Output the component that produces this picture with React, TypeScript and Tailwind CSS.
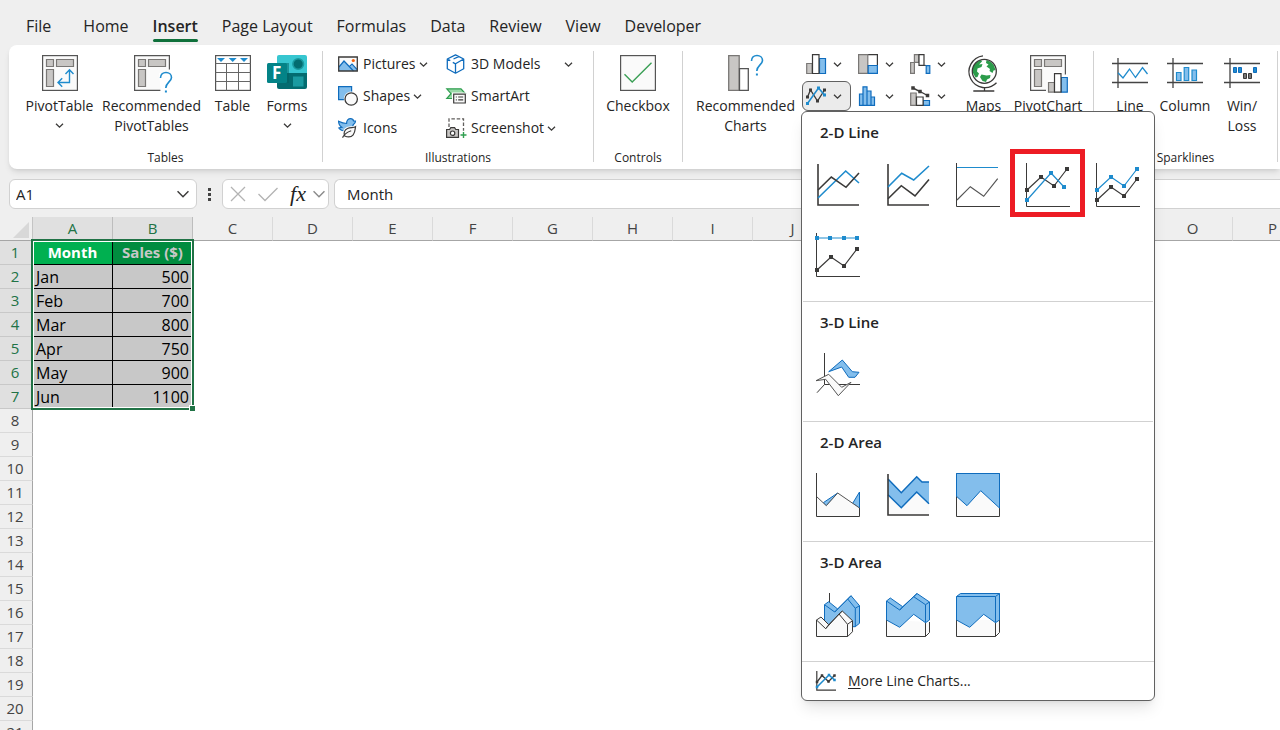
import type { ReactNode } from 'react'
import clsx from 'clsx'

const INK = '#3b3a39'
const GREY = '#c8c6c4'
const EDGE = '#797775'
const BLUE = '#1e8bcd'
const NAVY = '#0f6cbd'
const SKY = '#83beec'
const PALE = '#fafafa'

type Point = [number, number]

const toPoints = (points: Point[]) => points.map((p) => p.join(',')).join(' ')

function Svg({
  w,
  h = w,
  children,
}: {
  w: number
  h?: number
  children: ReactNode
}) {
  return (
    <svg
      width={w}
      height={h}
      viewBox={`0 0 ${w} ${h}`}
      fill="none"
      className="shrink-0 overflow-visible"
      aria-hidden="true"
    >
      {children}
    </svg>
  )
}

function Chevron({ size = 9, color = INK, thin }: { size?: number; color?: string; thin?: boolean }) {
  return (
    <svg
      width={size}
      height={size}
      viewBox="0 0 9 9"
      fill="none"
      className="shrink-0"
      aria-hidden="true"
    >
      <path d="M1 2.7 4.5 6.2 8 2.7" stroke={color} strokeWidth={thin ? 0.9 : 1.3} />
    </svg>
  )
}

/* ---------- ribbon icons ---------- */

function QuestionMark({ x, y }: { x: number; y: number }) {
  return (
    <g transform={`translate(${x} ${y})`}>
      <path
        d="M.5 6C.5 2.5 3 .5 6 .5s5.500 2 5.500 5C11.500 9.500 5.800 10.500 5.800 16"
        stroke={BLUE}
        strokeWidth="1.6"
      />
      <path d="M4.900 18.500h2v2h-2z" fill={BLUE} />
    </g>
  )
}

function PivotBoxes() {
  return (
    <g fill={GREY} stroke={EDGE} strokeWidth="1.2">
      <path d="M4.500 4.500h7v7h-7zM14.500 4.500h17v7h-17zM4.500 14.500h7v17h-7z" />
    </g>
  )
}

function PivotTableIcon() {
  return (
    <Svg w={36}>
      <rect x=".6" y=".6" width="34.800" height="34.800" fill={PALE} stroke="#555" strokeWidth="1.200" />
      <PivotBoxes />
      <path
        d="M27.500 15v12.500H16M23.500 19l4-4.300 4 4.300M20.200 23.300 16 27.500l4.200 4.200"
        stroke={BLUE}
        strokeWidth="1.400"
      />
    </Svg>
  )
}

function RecommendedPivotIcon() {
  return (
    <Svg w={36}>
      <path d="M.6.6h34.800v34.800H.6z" fill={PALE} />
      <path d="M26.500 35.400H.6V.6h34.800v14" stroke="#555" strokeWidth="1.200" />
      <PivotBoxes />
      <path d="M25 18h14v20H27z" fill="#fff" />
      <QuestionMark x={26} y={17} />
    </Svg>
  )
}

function TableIcon() {
  return (
    <Svg w={36}>
      <rect x=".6" y=".6" width="34.800" height="34.800" fill="#fff" stroke="#555" strokeWidth="1.200" />
      <path d="M.5 8.500h35M.5 17.500h35M.5 26.500h35M11.500 8.500v27M23.500 8.500v27" stroke="#666" />
      <path d="M2 3h8L6 7zM13.700 3h8l-4 4zM25 3h8l-4 4z" fill={BLUE} />
    </Svg>
  )
}

function FormsIcon() {
  return (
    <Svg w={40} h={36}>
      <path d="M12 0h26a2 2 0 0 1 2 2v16H10V2a2 2 0 0 1 2-2z" fill="#37c6d0" />
      <path d="M10 18h30v14a2 2 0 0 1-2 2H12a2 2 0 0 1-2-2z" fill="#036c70" />
      <circle cx="31.200" cy="9" r="5.300" fill="#036c70" stroke="#1a9ba1" strokeWidth="1.600" />
      <path d="M26 21.500h10.500v10H26z" fill="#1a9ba1" />
      <path d="M11 8h11v20H11z" fill="#025f62" opacity=".5" />
      <rect y="8" width="20" height="20" rx="1.500" fill="#038387" />
      <text x="5" y="24" fill="#fff" fontSize="17" fontWeight="700">
        F
      </text>
    </Svg>
  )
}

function PicturesIcon() {
  return (
    <Svg w={20}>
      <path d="M.7 3h18.600v14H.7z" fill={PALE} />
      <path d="M1 13 6 7l6 6 2-2 5 5v1H1z" fill={SKY} />
      <path d="m1 13 5-6 9.500 10M11.500 12.500 14 10l5 5.500" stroke={NAVY} strokeWidth="1.200" />
      <path d="M.7 3h18.600v14H.7z" stroke={INK} strokeWidth="1.300" />
      <circle cx="15.300" cy="6.500" r="1.600" fill="#f7630c" />
    </Svg>
  )
}

function ShapesIcon() {
  return (
    <Svg w={20}>
      <path d="M.6.600h13v13H.6z" fill={SKY} stroke={NAVY} strokeWidth="1.200" />
      <circle cx="13.200" cy="13" r="7.400" fill="#fff" />
      <circle cx="13.200" cy="13" r="6.200" fill={PALE} stroke={INK} strokeWidth="1.300" />
    </Svg>
  )
}

function IconsIcon() {
  return (
    <Svg w={20}>
      <path
        d="M.6 3.300c3 1.500 5 2.200 8 2.200C8.500 2.500 10.300.7 12.600.7c1.500 0 2.700 1 3 2.300h1.900c0 2-1 3-2.200 3.600-.6 3.700-4 6.400-8 6.400-3 0-5-1-6.500-3l3-.8C1.800 8 .6 6 .6 3.300z"
        fill={SKY}
        stroke={NAVY}
        strokeWidth="1.200"
      />
      <path
        d="M17.500 8.800c-2 1.200-5 .5-8 1.700-3.500 1.500-4 5-2.800 7.500 3 1.300 6.500 1.200 8.500-1.200 2-2.500 1.800-5 2.300-8z"
        fill="#fff"
        stroke="#fff"
        strokeWidth="3"
      />
      <path
        d="M17.500 8.800c-2 1.200-5 .5-8 1.700-3.500 1.500-4 5-2.800 7.500 3 1.300 6.500 1.200 8.500-1.200 2-2.500 1.800-5 2.300-8zM4.500 19.600c2-3.500 5-5.600 8.700-6.800"
        fill={PALE}
        stroke={INK}
        strokeWidth="1.200"
      />
    </Svg>
  )
}

function CubeIcon() {
  return (
    <Svg w={20}>
      <path
        d="M9.500.800 17.700 5v9.800l-8.200 4.400-8.200-4.400V5zM9.500 19V9.800L17.700 5M6.800 8.400l2.700 1.400M1.300 5l3 1.600M12.600 2.600 7.500 5"
        stroke={NAVY}
        strokeWidth="1.300"
        strokeLinejoin="round"
      />
    </Svg>
  )
}

function SmartArtIcon() {
  return (
    <Svg w={20}>
      <path d="M.8 2.800H15l4.200 4.700H7v5H.8L5 7.700z" fill="#9ad9a8" stroke="#2f9e4f" strokeWidth="1.200" />
      <path d="M6 6.500h14v12H6z" fill="#fff" />
      <path d="M7.700 8.200h11.600v8.800H7.700z" fill={PALE} stroke={INK} strokeWidth="1.200" />
      <path d="M9.800 11h1M12.200 11h5M9.800 13.800h1M12.200 13.800h5" stroke={INK} strokeWidth="1.200" />
    </Svg>
  )
}

function ScreenshotIcon() {
  return (
    <Svg w={20}>
      <path d="M3 9V.800h14.500v12" stroke="#605e5c" strokeWidth="1.300" strokeDasharray="3.500 1.800" />
      <path d="M.6 11.500h3l1.200-1.800h3.800l1.200 1.800h2.700v7.800H.6z" fill={GREY} stroke={INK} strokeWidth="1.200" />
      <circle cx="6.600" cy="15.200" r="2.200" fill="#fff" stroke={INK} strokeWidth="1.200" />
      <path d="M17.500 14v6M14.500 17h6" stroke="#2f9e4f" strokeWidth="1.400" />
    </Svg>
  )
}

function CheckboxIcon() {
  return (
    <Svg w={36}>
      <rect x=".6" y=".6" width="34.800" height="34.800" fill={PALE} stroke="#555" strokeWidth="1.200" />
      <path d="m4.500 19.200 7.700 7.800L31.500 7.800" stroke="#3a9f55" strokeWidth="1.400" />
    </Svg>
  )
}

function RecommendedChartsIcon() {
  return (
    <Svg w={36}>
      <path d="M.7.600h10.500v34.800H.7z" fill={GREY} stroke={EDGE} strokeWidth="1.300" />
      <path d="M11.500 13.600h8.800v21.800h-8.800z" fill="#fff" stroke="#555" strokeWidth="1.300" />
      <QuestionMark x={23} y={0} />
    </Svg>
  )
}

function ColumnChartIcon() {
  return (
    <Svg w={20}>
      <path d="M.7 9.500h5.500v10H.7z" fill={GREY} stroke={EDGE} strokeWidth="1.200" />
      <path d="M13.500 4.500h6v15h-6z" fill={SKY} stroke={NAVY} strokeWidth="1.200" />
      <path d="M6.500.600h6.500v18.900H6.500z" fill="#fff" stroke={INK} strokeWidth="1.200" />
    </Svg>
  )
}

function TreemapIcon() {
  return (
    <Svg w={20}>
      <path d="M.6.600h18.800v18.800H.6z" fill="#fff" stroke={INK} strokeWidth="1.200" />
      <path d="M.6.600h9.200v18.800H.6z" fill={GREY} stroke={EDGE} strokeWidth="1.200" />
      <path d="M10.200 11.500h9.200v7.900h-9.200z" fill={SKY} stroke={NAVY} strokeWidth="1.200" />
    </Svg>
  )
}

function WaterfallIcon() {
  return (
    <Svg w={20}>
      <path d="M.6 19.400V8.500h3.800V.600h4.500v7.700H4.400v11.100z" fill={GREY} stroke={EDGE} strokeWidth="1.200" />
      <path d="M9 .600h5v10.800H9z" fill="#fff" stroke={INK} strokeWidth="1.200" />
      <path d="M14 11.400h2" stroke={INK} />
      <path d="M16.200 11.600h3.600v7.800h-3.600z" fill={SKY} stroke={NAVY} strokeWidth="1.200" />
    </Svg>
  )
}

function SmallLineIcon({ axis = false }: { axis?: boolean }) {
  const dark: Point[] = axis
    ? [[1, 11], [6, 4.500], [12.500, 10.500], [18.500, 4.500]]
    : [[1.500, 11], [4.500, 4], [11.500, 15], [18.500, 4]]
  const blue: Point[] = axis
    ? [[1, 16], [13, 4], [18.500, 9]]
    : [[1.500, 17.500], [12.500, 2], [18.500, 9]]
  return (
    <Svg w={20}>
      {axis && <path d="M.8 0v19.200H20" stroke={INK} strokeWidth="1.200" />}
      <Series points={dark} color={INK} width={1.3} dot={axis ? 2.5 : 3} />
      <Series points={blue} color={BLUE} width={1.5} dot={axis ? 2.5 : 3} />
    </Svg>
  )
}

function HistogramIcon() {
  return (
    <Svg w={20}>
      <path
        d="M1.500 8h3.500v11.400H1.500zM5 .800h4v18.600H5zM9 5h4v14.400H9zM13 11h3.500v8.400H13z"
        fill={SKY}
        stroke={NAVY}
        strokeWidth="1.200"
      />
    </Svg>
  )
}

function ComboIcon() {
  return (
    <Svg w={20}>
      <path d="M.7 7h5.500v12.400H.7z" fill={GREY} stroke={EDGE} strokeWidth="1.200" />
      <path d="M13.300 14.500h6.200v4.900h-6.200z" fill={SKY} stroke={NAVY} strokeWidth="1.200" />
      <path d="M6.500 11h6.600v8.400H6.500z" fill="#fff" stroke={INK} strokeWidth="1.200" />
      <Series points={[[3, 2], [10, 5.500], [17.500, 9.500]]} color={INK} width={1.4} dot={3.5} />
    </Svg>
  )
}

function GlobeIcon() {
  return (
    <Svg w={36} h={38}>
      <path d="M17 .8a16 16 0 1 0 13.500 27" stroke={INK} strokeWidth="1.300" />
      <path d="M18.500 32.500V36M7.300 36h21" stroke={INK} strokeWidth="1.300" />
      <circle cx="18.300" cy="16.300" r="12" fill="#fff" />
      <path
        d="M7 12c1.500-3 4-5.500 8-7l1 1.500-3 3 3.500-.5-1 3-4 1.500-.5 3 2 2-1.500 3.500-2 .5L7 18zM20.500 5c3 .5 6 3 7.500 5.500l1.500 4.500-2 .5-1 2.500-3-2 .5-2-3.500-2.500 2-2-2.500-1.500zM15.500 19.500l5 1 4-.5-.5 3-3 1.500-1 2.500-3.500-1-2.500-4z"
        fill="#2c9c4b"
      />
      <circle cx="18.300" cy="16.300" r="12" stroke={INK} strokeWidth="1.300" />
    </Svg>
  )
}

function PivotChartIcon() {
  return (
    <Svg w={36}>
      <path d="M.6.600h34.800v34.800H.6z" fill={PALE} />
      <path d="M16 35.400H.6V.600h34.800v19" stroke="#555" strokeWidth="1.200" />
      <PivotBoxes />
      <path d="M17 25h6v-8h9v3h7v18H17z" fill="#fff" />
      <path d="M18.500 27.500h6v9.700h-6z" fill={GREY} stroke={EDGE} strokeWidth="1.200" />
      <path d="M31.300 22.500h6v14.700h-6z" fill={SKY} stroke={NAVY} strokeWidth="1.200" />
      <path d="M24.500 18.700h6.500v18.500h-6.500z" fill="#fff" stroke={INK} strokeWidth="1.200" />
    </Svg>
  )
}

function SparkFrame({ children }: { children: ReactNode }) {
  return (
    <Svg w={36}>
      <path d="M0 8.500h36M0 27.500h36M6 3v30" stroke="#444" strokeWidth="1.300" />
      {children}
    </Svg>
  )
}

/* ---------- chart thumbnails ---------- */

function Series({
  points,
  color,
  width = 1.2,
  dot = 0,
}: {
  points: Point[]
  color: string
  width?: number
  dot?: number
}) {
  return (
    <g>
      <polyline points={toPoints(points)} stroke={color} strokeWidth={width} />
      {dot > 0 &&
        points.map(([x, y]) => (
          <rect key={`${x}-${y}`} x={x - dot / 2} y={y - dot / 2} width={dot} height={dot} fill={color} />
        ))}
    </g>
  )
}

const ThinAxis = () => <path d="M.5 0v43.500H44" stroke={INK} />
const BoldAxis = () => <path d="M2 1v41h41" stroke={INK} strokeWidth="1.600" />

const HIGH: Point[] = [[1, 27], [15, 14], [28, 23], [41, 6]]
const LOW: Point[] = [[1, 37], [15, 24], [28, 33], [41, 16]]

const sections: { title: string; charts: { name: string; art: ReactNode }[] }[] = [
  {
    title: '2-D Line',
    charts: [
      {
        name: 'Line',
        art: (
          <>
            <BoldAxis />
            <Series points={[[2, 35], [29.700, 8], [43, 20]]} color={BLUE} width={1.6} />
            <Series points={[[2, 27], [15.300, 14], [30, 24.300], [43, 10]]} color={INK} width={1.6} />
          </>
        ),
      },
      {
        name: 'Stacked Line',
        art: (
          <>
            <BoldAxis />
            <Series points={[[2, 24], [15.700, 10.300], [27.700, 17], [43, 3]]} color={BLUE} width={1.6} />
            <Series points={[[2, 35.700], [15.300, 22.700], [29, 33], [43, 16.500]]} color={INK} width={1.6} />
          </>
        ),
      },
      {
        name: '100% Stacked Line',
        art: (
          <>
            <ThinAxis />
            <Series points={[[1, 4.500], [42, 4.500]]} color={BLUE} width={1} />
            <Series points={[[1, 37], [14.300, 23.700], [27.700, 33.300], [41.700, 15.700]]} color="#555" />
          </>
        ),
      },
      {
        name: 'Line with Markers',
        art: (
          <>
            <ThinAxis />
            <Series points={HIGH} color={INK} dot={4} />
            <Series points={[[1, 37], [25, 10], [38, 24]]} color={BLUE} dot={4} />
          </>
        ),
      },
      {
        name: 'Stacked Line with Markers',
        art: (
          <>
            <ThinAxis />
            <Series points={HIGH} color={BLUE} dot={4} />
            <Series points={LOW} color={INK} dot={4} />
          </>
        ),
      },
      {
        name: '100% Stacked Line with Markers',
        art: (
          <>
            <ThinAxis />
            <Series points={[[1, 5], [14, 5], [28, 5], [41, 5]]} color={BLUE} dot={4} />
            <Series points={LOW} color={INK} dot={4} />
          </>
        ),
      },
    ],
  },
  {
    title: '3-D Line',
    charts: [
      {
        name: '3-D Line',
        art: (
          <>
            <path d="M8.500 0v31.500H44M8.500 31.500 1 39.700" stroke={INK} />
            <path
              d="M12.700 18.700 26.300 7l10 11.700 6.700.6-4 5h-6.300L25.700 14z"
              fill={SKY}
              stroke={NAVY}
            />
            <path
              d="m0 27.700 12.700-6.400 13 13 9.300-5-12.700 13.400L9.700 26.300z"
              fill={PALE}
              stroke="#555"
            />
          </>
        ),
      },
    ],
  },
  {
    title: '2-D Area',
    charts: [
      {
        name: 'Area',
        art: (
          <>
            <path d="m7.300 29.700 14.400-9.700-11.400 12.700zM36.700 30.300 43.500 19v16z" fill={SKY} stroke={NAVY} />
            <path d="m.5 23.500 9.800 9.200L21.700 20l21.800 15v8.500H.5z" fill={PALE} />
            <path d="m.5 23.500 9.800 9.200L21.700 20l21.800 15" stroke="#555" />
            <path d="M.5 0v43.500h43V35" stroke={INK} />
          </>
        ),
      },
      {
        name: 'Stacked Area',
        art: (
          <>
            <path d="m2 21.700 13.300 13L30.700 19 43 30.700V42H2z" fill={PALE} />
            <path d="m2 6 13.300 13.700L30.700 3.700 36 9h7v21.700L30.700 19 15.300 34.700 2 21.700z" fill={SKY} />
            <path
              d="m2 6 13.300 13.700L30.700 3.700 36 9h7M43 30.700 30.700 19 15.300 34.700 2 21.700"
              stroke={NAVY}
              strokeWidth="1.500"
            />
            <BoldAxis />
          </>
        ),
      },
      {
        name: '100% Stacked Area',
        art: (
          <>
            <path d="M.5.500h43v43H.5z" fill={PALE} stroke={INK} />
            <path d="M.5.500h43V35L24.700 17.700 11 32.700.5 23.300z" fill={SKY} stroke={NAVY} />
          </>
        ),
      },
    ],
  },
  {
    title: '3-D Area',
    charts: [
      {
        name: '3-D Area',
        art: (
          <>
            <path d="M13.500 0v10" stroke={INK} />
            <path
              d="m8.500 11.700 4.200-3 9 7.300L35 2.700l8.500 10v17.600l-4.200 3.400H8.500z"
              fill={SKY}
              stroke={NAVY}
            />
            <path
              d="M8.500 11.700 18.700 19l13-13 7.600 9.300v18.400M39.300 15.300l4.200-2.600M31.700 6 35 2.700M18.700 19l3-3"
              stroke={NAVY}
            />
            <path
              d="M.5 27 5 24l7.700 7.700L26.300 18l10.200 9.700v11l-4.800 4.800H.5z"
              fill={PALE}
              stroke={INK}
            />
            <path
              d="m.5 27 9.200 8.700L23 21l8.500 10.300v12.200M31.500 31.300l5-3.600M23 21l3.300-3M9.700 35.700l3-4"
              stroke={INK}
            />
          </>
        ),
      },
      {
        name: '3-D Stacked Area',
        art: (
          <>
            <path d="M.5 27v16.500h39l4-4V29M39.500 29.500v14" fill={PALE} stroke={INK} />
            <path
              d="m.5 8 3.800-3 12.400 8.700L31 .500 43.500 9v18l-4 2.700-11.800-8.400-14 13L.5 27z"
              fill={SKY}
              stroke={NAVY}
            />
            <path
              d="m.5 8 13.200 9 14-13.300 11.800 8v18M39.500 11.700l4-2.700M13.700 17l3-3.300M27.700 3.700 31 .500"
              stroke={NAVY}
            />
          </>
        ),
      },
      {
        name: '3-D 100% Stacked Area',
        art: (
          <>
            <path d="M.5 27v16.500h39l4-4V27M39.500 29.500v14" fill={PALE} stroke={INK} />
            <path d="m.5 3.500 4-3h39V27l-4 2.700-11.800-8.400-14 13L.5 27z" fill={SKY} stroke={NAVY} />
            <path d="M.5 3.500h39v26M39.500 3.500l4-3" stroke={NAVY} />
          </>
        ),
      },
    ],
  },
]

/* ---------- ribbon ---------- */

function RibbonGroup({
  label,
  className,
  children,
}: {
  label?: string
  className?: string
  children: ReactNode
}) {
  return (
    <>
      <section className={clsx('flex shrink-0 flex-col justify-between', className)}>
        <div className="flex justify-center">{children}</div>
        {label && <h2 className="pb-[3px] text-center text-xs leading-4">{label}</h2>}
      </section>
      <div className="mt-1.5 h-[111px] w-px shrink-0 bg-[#d1d1d1]" />
    </>
  )
}

function BigButton({
  icon,
  lines,
  menu,
  className,
}: {
  icon: ReactNode
  lines: string[]
  menu?: boolean
  className?: string
}) {
  return (
    <button
      type="button"
      className={clsx('flex shrink-0 flex-col items-center pt-2.5 text-sm leading-5', className)}
    >
      <span className="flex h-[41px] items-start">{icon}</span>
      {lines.map((line) => (
        <span key={line} className="whitespace-nowrap">
          {line}
        </span>
      ))}
      {menu && (
        <span className="flex h-[18px] items-center">
          <Chevron />
        </span>
      )}
    </button>
  )
}

function RowButton({ icon, label, menu }: { icon: ReactNode; label: string; menu?: 'near' | 'far' }) {
  return (
    <button type="button" className="flex h-8 items-center whitespace-nowrap text-sm">
      {icon}
      <span className="ml-[5px]">{label}</span>
      {menu && (
        <span className={menu === 'far' ? 'ml-6' : 'ml-[3px]'}>
          <Chevron />
        </span>
      )}
    </button>
  )
}

function ChartButton({ icon, label, open }: { icon: ReactNode; label: string; open?: boolean }) {
  return (
    <button
      type="button"
      aria-label={label}
      className={clsx(
        'flex h-[30px] w-[49px] items-center gap-[7px] rounded-md border pl-[3px]',
        open ? 'border-[#616161] bg-[#ebebeb]' : 'border-transparent',
      )}
    >
      {icon}
      <Chevron />
    </button>
  )
}

function LineChartMenu() {
  return (
    <div className="absolute top-full left-[-1px] z-20 w-[354px] rounded-md border border-[#616161] bg-white shadow-lg">
      {sections.map((section, i) => (
        <section key={section.title} className={clsx('mx-px pb-[11px]', i > 0 && 'border-t border-[#d1d1d1]')}>
          <h3 className="pt-2.5 pb-2 pl-[17px] text-[15px] leading-5 font-semibold">{section.title}</h3>
          <div className="grid grid-cols-5">
            {section.charts.map((chart) => (
              <button
                key={chart.name}
                type="button"
                aria-label={chart.name}
                className="relative flex h-[70px] items-center justify-center"
              >
                <Svg w={44}>{chart.art}</Svg>
                {chart.name === 'Line with Markers' && (
                  <span className="absolute top-[-1px] left-[-3px] h-[68px] w-[75px] border-5 border-[#ed1c24]" />
                )}
              </button>
            ))}
          </div>
        </section>
      ))}
      <button
        type="button"
        className="flex h-[39px] w-full items-center gap-3 border-t border-[#d1d1d1] pl-[14px] text-sm"
      >
        <SmallLineIcon axis />
        <span>
          <u className="underline-offset-2">M</u>ore Line Charts...
        </span>
      </button>
    </div>
  )
}

function Ribbon() {
  return (
    <div className="ml-[9px] flex h-[124px] shrink-0 rounded-l-lg bg-white shadow-md">
      <RibbonGroup label="Tables" className="w-[313px]">
        <BigButton icon={<PivotTableIcon />} lines={['PivotTable']} menu className="ml-1.5 w-[75px]" />
        <BigButton icon={<RecommendedPivotIcon />} lines={['Recommended', 'PivotTables']} className="w-[109px]" />
        <BigButton icon={<TableIcon />} lines={['Table']} className="w-[53px]" />
        <BigButton icon={<FormsIcon />} lines={['Forms']} menu className="w-14" />
      </RibbonGroup>
      <RibbonGroup label="Illustrations" className="w-[270px]">
        <div className="grid flex-1 grid-cols-[108px_auto] pt-[3px] pl-[15px]">
          <RowButton icon={<PicturesIcon />} label="Pictures" menu="near" />
          <RowButton icon={<CubeIcon />} label="3D Models" menu="far" />
          <RowButton icon={<ShapesIcon />} label="Shapes" menu="near" />
          <RowButton icon={<SmartArtIcon />} label="SmartArt" />
          <RowButton icon={<IconsIcon />} label="Icons" />
          <RowButton icon={<ScreenshotIcon />} label="Screenshot" menu="near" />
        </div>
      </RibbonGroup>
      <RibbonGroup label="Controls" className="w-[88px]">
        <BigButton icon={<CheckboxIcon />} lines={['Checkbox']} className="w-full" />
      </RibbonGroup>
      <RibbonGroup className="w-[410px]">
        <BigButton
          icon={<RecommendedChartsIcon />}
          lines={['Recommended', 'Charts']}
          className="mr-[3px] w-[107px]"
        />
        <div className="grid grid-cols-3 gap-x-[3px] gap-y-0.5 self-start pt-1">
          <ChartButton icon={<ColumnChartIcon />} label="Column or Bar Chart" />
          <ChartButton icon={<TreemapIcon />} label="Hierarchy Chart" />
          <ChartButton icon={<WaterfallIcon />} label="Waterfall Chart" />
          <div className="relative">
            <ChartButton icon={<SmallLineIcon />} label="Line or Area Chart" open />
            <LineChartMenu />
          </div>
          <ChartButton icon={<HistogramIcon />} label="Statistic Chart" />
          <ChartButton icon={<ComboIcon />} label="Combo Chart" />
        </div>
        <BigButton icon={<GlobeIcon />} lines={['Maps']} className="w-[57px]" />
        <BigButton icon={<PivotChartIcon />} lines={['PivotChart']} className="w-[72px]" />
      </RibbonGroup>
      <RibbonGroup label="Sparklines" className="w-[183px]">
        <BigButton
          icon={
            <SparkFrame>
              <polyline points="6,17.700 11,23 17.500,14 23.500,22.500 30.500,12.700 35.500,19" stroke={BLUE} strokeWidth="1.300" />
            </SparkFrame>
          }
          lines={['Line']}
          className="ml-[3px] w-[54px]"
        />
        <BigButton
          icon={
            <SparkFrame>
              <path
                d="M9.500 17.500H14v8H9.500zM17.200 12.500h4.500v13h-4.500zM25 15h4.500v10.500H25z"
                fill={SKY}
                stroke={BLUE}
                strokeWidth="1.200"
              />
            </SparkFrame>
          }
          lines={['Column']}
          className="w-14"
        />
        <BigButton
          icon={
            <SparkFrame>
              <path d="M9.500 12.500h3v5h-3zM14.500 12.500h3v5h-3zM29.500 12.500h3v5h-3z" fill={BLUE} stroke={NAVY} />
              <path d="M19.500 18.500h3v5h-3zM24.500 18.500h3v5h-3z" fill={EDGE} stroke={INK} />
            </SparkFrame>
          }
          lines={['Win/', 'Loss']}
          className="w-[58px]"
        />
      </RibbonGroup>
    </div>
  )
}

/* ---------- sheet ---------- */

const tabs = ['File', 'Home', 'Insert', 'Page Layout', 'Formulas', 'Data', 'Review', 'View', 'Developer']
const columns = 'ABCDEFGHIJKLMNOP'.split('')
const rows = Array.from({ length: 21 }, (_, i) => i + 1)
const data = [
  ['Month', 'Sales ($)'],
  ['Jan', '500'],
  ['Feb', '700'],
  ['Mar', '800'],
  ['Apr', '750'],
  ['May', '900'],
  ['Jun', '1100'],
]

function FormulaBar() {
  return (
    <div className="mt-2.5 ml-[9px] flex h-[30px] shrink-0 text-[15px]">
      <div className="flex w-[188px] shrink-0 items-center rounded-md border border-[#d1d1d1] bg-white pr-1.5 pl-1.5">
        <input aria-label="Name box" defaultValue="A1" className="min-w-0 flex-1 outline-none" />
        <button type="button" aria-label="Show names">
          <Chevron size={14} thin />
        </button>
      </div>
      <div className="flex w-[25px] shrink-0 flex-col items-center justify-center gap-0.5">
        <span className="size-[3px] bg-[#444]" />
        <span className="size-[3px] bg-[#444]" />
        <span className="size-[3px] bg-[#444]" />
      </div>
      <div className="flex w-[107px] shrink-0 items-center justify-between rounded-md border border-[#d1d1d1] bg-white pr-0.5 pl-[7px]">
        <button type="button" aria-label="Cancel">
          <Svg w={16}>
            <path d="m1 1 14 14M15 1 1 15" stroke="#b3b3b3" strokeWidth="1.300" />
          </Svg>
        </button>
        <button type="button" aria-label="Enter">
          <Svg w={20} h={16}>
            <path d="m.5 8 6.500 6.500L19.500 2" stroke="#b3b3b3" strokeWidth="1.300" />
          </Svg>
        </button>
        <button
          type="button"
          aria-label="Insert function"
          className="flex items-center gap-1.5 font-['Liberation_Serif',serif] text-[22px] leading-6 text-[#222] italic"
        >
          fx
          <Chevron size={14} color="#8a8a8a" thin />
        </button>
      </div>
      <input
        aria-label="Formula bar"
        defaultValue="Month"
        className="ml-[5px] min-w-0 flex-1 rounded-l-md border border-r-0 border-[#d1d1d1] bg-white pl-3 outline-none"
      />
    </div>
  )
}

function Sheet() {
  return (
    <div className="relative mt-2 min-h-0 flex-1 overflow-hidden">
      <table className="w-[1313px] table-fixed border-separate border-spacing-0 bg-white text-base leading-5">
        <thead>
          <tr>
            <th className="h-6 w-[33px] border-r border-b border-r-[#c4c4c4] border-b-[#a6a6a6] bg-[#efefef] p-0">
              <svg width="16" height="16" className="mt-0.5 mr-[3px] ml-auto" aria-hidden="true">
                <path d="M16 0v16H0z" fill="#d8d8d8" />
              </svg>
            </th>
            {columns.map((column, i) => (
              <th
                key={column}
                scope="col"
                className={clsx(
                  'h-6 w-20 border-r border-b border-b-[#a6a6a6] p-0 pb-0.5 text-[15px] font-normal',
                  i < 2 ? 'border-r-[#bdbdbd] bg-[#e0e0e0] text-[#217346]' : 'border-r-[#dadada] bg-[#efefef] text-[#444]',
                )}
              >
                {column}
              </th>
            ))}
          </tr>
        </thead>
        <tbody>
          {rows.map((row) => {
            const cells = data[row - 1]
            return (
              <tr key={row}>
                <th
                  scope="row"
                  className={clsx(
                    'h-6 border-r border-b border-r-[#a6a6a6] p-0 pr-0.5 pb-0.5 text-[15px] font-normal',
                    cells ? 'border-b-[#c8c8c8] bg-[#e0e0e0] text-[#217346]' : 'border-b-[#dadada] bg-[#efefef] text-[#444]',
                  )}
                >
                  {row}
                </th>
                {cells?.map((cell, i) => (
                  <td
                    key={cell}
                    className={clsx(
                      'h-6 border-r border-b border-black px-[3px]',
                      row > 1 && 'bg-[#c8c8c8] py-0 text-base leading-5 text-black',
                      row > 1 && i === 1 && 'text-right',
                      row === 1 && 'pt-0 pb-0.5 text-center text-[15px] font-bold',
                      row === 1 && (i === 0 ? 'bg-[#00b050] text-white' : 'bg-[#008c3f] text-[#c8c8c8]'),
                    )}
                  >
                    {cell}
                  </td>
                ))}
                <td colSpan={cells ? 14 : 16} className="h-6 p-0" />
              </tr>
            )
          })}
        </tbody>
      </table>
      {/* selection frame around A1:B7 */}
      <div className="pointer-events-none absolute top-[22px] left-[31px] h-[171px] w-[163px] border-2 border-[#217346]">
        <div className="h-full border border-white" />
        <div className="absolute right-[-4px] bottom-[-4px] size-[7px] border border-white bg-[#217346]" />
      </div>
    </div>
  )
}

export default function App() {
  return (
    <div className="flex h-screen flex-col overflow-hidden bg-[#efefef] font-['Open_Sans','Noto_Sans',sans-serif] text-[#242424]">
      <nav className="flex h-[45px] shrink-0 gap-6 pt-3.5 pl-[26px] text-base leading-6">
        {tabs.map((tab) => (
          <button
            key={tab}
            type="button"
            className={clsx(
              'flex h-7 flex-col whitespace-nowrap',
              tab === 'File' && 'mr-2',
              tab === 'Insert' && 'font-semibold',
            )}
          >
            {tab}
            {tab === 'Insert' && <span className="mt-px h-[3px] w-full shrink-0 rounded-full bg-[#0f703b]" />}
          </button>
        ))}
      </nav>
      <Ribbon />
      <FormulaBar />
      <Sheet />
    </div>
  )
}
